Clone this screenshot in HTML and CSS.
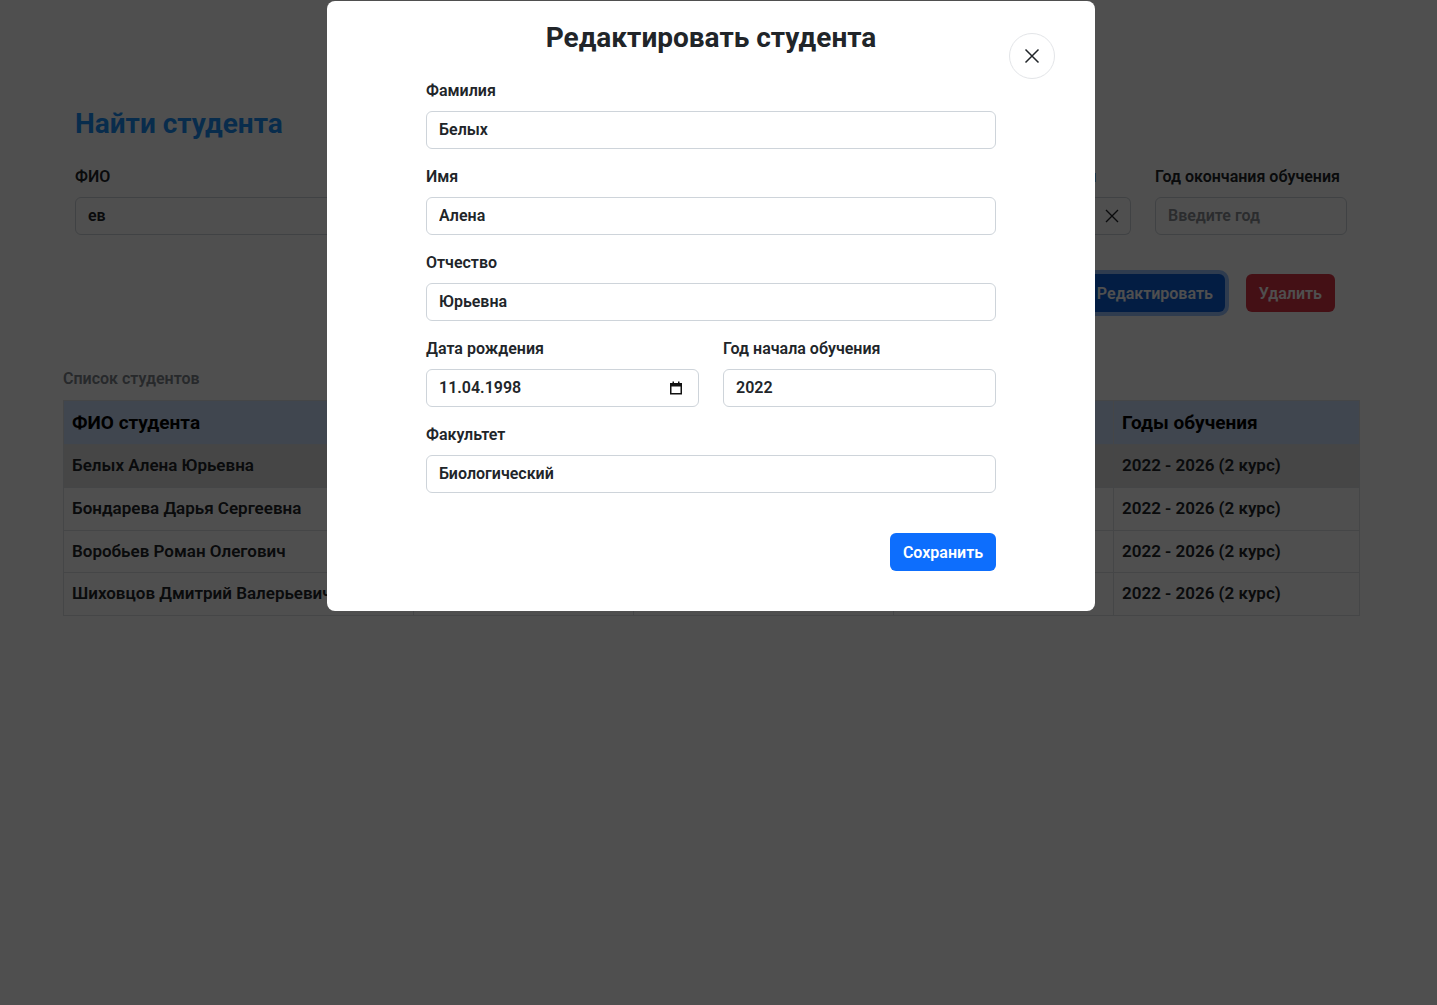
FILE: index.html
```html
<!DOCTYPE html>
<html lang="ru">
<head>
<meta charset="utf-8">
<title>Студенты</title>
<link rel="stylesheet" href="styles.css">
</head>
<body>
<div class="page">
  <main class="container">
    <section class="search">
      <h1 class="search-title">Найти студента</h1>
      <div class="filters">
        <div class="field field-name">
          <label class="label">ФИО</label>
          <input class="input" value="ев">
        </div>
        <div class="field field-fac">
          <label class="label">Факультет</label>
          <input class="input" placeholder="Выберите факультет">
        </div>
        <div class="field field-year">
          <label class="label">Год начала обучения</label>
          <div class="input-group">
            <input class="input input-grouped" value="2022">
            <button class="clear-btn" type="button" aria-label="Очистить">
              <svg width="16" height="16" viewBox="0 0 16 16"><path d="M2 2L14 14M14 2L2 14" stroke="#212529" stroke-width="1.4" fill="none"/></svg>
            </button>
          </div>
        </div>
        <div class="field field-year">
          <label class="label">Год окончания обучения</label>
          <input class="input" placeholder="Введите год">
        </div>
      </div>
      <div class="actions">
        <button class="btn btn-edit" type="button">Редактировать</button>
        <button class="btn btn-delete" type="button">Удалить</button>
      </div>
    </section>

    <div class="list-caption">Список студентов</div>
    <table class="students">
      <colgroup>
        <col class="c-name"><col class="c-date"><col class="c-fac"><col class="c-start"><col class="c-years">
      </colgroup>
      <thead>
        <tr><th>ФИО студента</th><th>Дата рождения</th><th>Факультет</th><th>Год начала</th><th>Годы обучения</th></tr>
      </thead>
      <tbody>
        <tr class="active"><td>Белых Алена Юрьевна</td><td>11.04.1998 (26 лет)</td><td>Биологический</td><td>2022</td><td>2022 - 2026 (2 курс)</td></tr>
        <tr><td>Бондарева Дарья Сергеевна</td><td>02.09.2000 (24 года)</td><td>Биологический</td><td>2022</td><td>2022 - 2026 (2 курс)</td></tr>
        <tr><td>Воробьев Роман Олегович</td><td>15.03.2001 (23 года)</td><td>Физический</td><td>2022</td><td>2022 - 2026 (2 курс)</td></tr>
        <tr><td>Шиховцов Дмитрий Валерьевич</td><td>21.07.2000 (24 года)</td><td>Математический</td><td>2022</td><td>2022 - 2026 (2 курс)</td></tr>
      </tbody>
    </table>
  </main>
</div>

<div class="backdrop"></div>

<div class="modal" role="dialog">
  <h2 class="modal-title">Редактировать студента</h2>
  <button class="modal-close" type="button" aria-label="Закрыть">
    <svg width="16" height="16" viewBox="0 0 16 16"><path d="M1.5 1.5L14.5 14.5M14.5 1.5L1.5 14.5" stroke="#212529" stroke-width="1.5" fill="none"/></svg>
  </button>
  <form class="modal-form">
    <div class="group">
      <label class="label">Фамилия</label>
      <input class="input" value="Белых">
    </div>
    <div class="group">
      <label class="label">Имя</label>
      <input class="input" value="Алена">
    </div>
    <div class="group">
      <label class="label">Отчество</label>
      <input class="input" value="Юрьевна">
    </div>
    <div class="group-row">
      <div class="group">
        <label class="label">Дата рождения</label>
        <div class="date-wrap">
          <input class="input" value="11.04.1998">
          <svg class="cal-icon" width="14" height="14" viewBox="0 0 14 14"><rect x="1.75" y="2.75" width="10.5" height="10" fill="none" stroke="#111" stroke-width="1.5"/><rect x="1" y="2" width="12" height="3.5" fill="#111"/><rect x="3.5" y="0.5" width="1.5" height="2" fill="#111"/><rect x="9" y="0.5" width="1.5" height="2" fill="#111"/></svg>
        </div>
      </div>
      <div class="group">
        <label class="label">Год начала обучения</label>
        <input class="input" value="2022">
      </div>
    </div>
    <div class="group">
      <label class="label">Факультет</label>
      <input class="input" value="Биологический">
    </div>
    <div class="modal-footer">
      <button class="btn btn-save" type="button">Сохранить</button>
    </div>
  </form>
</div>
</body>
</html>
```
FILE: styles.css
```css
* { box-sizing: border-box; }
html, body { margin: 0; height: 100%; }
body {
  font-family: Roboto, "Noto Sans", "Liberation Sans", sans-serif;
  font-size: 16px;
  color: #212529;
  background: #fff;
  overflow: hidden;
}
.page { width: 1422px; }
.container { width: 1320px; margin: 0 auto; padding: 0 12px; }

.search { padding: 106px 12px 0; }
.search-title {
  margin: 0;
  font-size: 28px;
  line-height: 36px;
  font-weight: 700;
  color: #1b8ff5;
}
.filters { display: flex; gap: 24px; margin-top: 23px; }
.field { display: flex; flex-direction: column; }
.field-name { flex: 1; }
.field-fac { width: 300px; }
.field-year { width: 192px; }

.label {
  display: block;
  font-size: 16px;
  line-height: 24px;
  font-weight: 600;
  margin-bottom: 8px;
  white-space: nowrap;
}
.input {
  display: block;
  width: 100%;
  height: 38px;
  border: 1px solid #ced4da;
  border-radius: 6px;
  padding: 0 12px 2px;
  font: inherit;
  font-weight: 600;
  line-height: 34px;
  color: #212529;
  background: #fff;
  outline: none;
}
.input::placeholder { color: #8a8f94; }
.input-group { display: flex; }
.input-grouped { border-radius: 6px 0 0 6px; }
.clear-btn {
  width: 38px;
  height: 38px;
  flex: none;
  border: 1px solid #ced4da;
  border-left: none;
  border-radius: 0 6px 6px 0;
  background: #fff;
  display: flex;
  align-items: center;
  justify-content: center;
  padding: 0;
}

.actions {
  display: flex;
  justify-content: flex-end;
  gap: 21px;
  margin-top: 39px;
  padding-right: 12px;
}
.btn {
  height: 38px;
  padding: 0 12px;
  border: none;
  border-radius: 6px;
  font: inherit;
  font-weight: 600;
  color: #fff;
}
.btn-edit { background: #0b5ed7; box-shadow: 0 0 0 4px rgba(49, 132, 253, .5); }
.btn-delete { background: #dc3545; padding: 0 13px; }

.list-caption {
  margin-top: 56px;
  margin-bottom: 10px;
  font-size: 16px;
  line-height: 22px;
  font-weight: 600;
  color: #7d848b;
}
.students {
  width: 1296px;
  border-collapse: collapse;
  table-layout: fixed;
}
.c-name { width: 350px; }
.c-date { width: 220px; }
.c-fac { width: 260px; }
.c-start { width: 220px; }
.c-years { width: 246px; }
.students th, .students td {
  border: 1px solid #dee2e6;
  padding: 8px;
  text-align: left;
  white-space: nowrap;
  overflow: hidden;
}
.students th {
  background: #cfe2ff;
  font-size: 19px;
  line-height: 27px;
  font-weight: 700;
  color: #000;
}
.students td {
  font-size: 17px;
  line-height: 25.75px;
  font-weight: 600;
}
.students tr.active td { background: #e0e1e2; }

.backdrop {
  position: fixed;
  inset: 0;
  background: rgba(0, 0, 0, .69);
}
.modal {
  position: fixed;
  top: 1px;
  left: 327px;
  width: 768px;
  background: #fff;
  border-radius: 8px;
  padding: 20px 99px 40px;
}
.modal-title {
  margin: 0 0 24px;
  text-align: center;
  font-size: 28px;
  line-height: 34px;
  font-weight: 700;
  color: #212529;
}
.modal-close {
  position: absolute;
  top: 32px;
  right: 40px;
  width: 46px;
  height: 46px;
  border-radius: 50%;
  border: 1px solid #e3e5e8;
  background: #fff;
  display: flex;
  align-items: center;
  justify-content: center;
  padding: 0;
}
.group { margin-bottom: 16px; }
.group-row { display: grid; grid-template-columns: 1fr 1fr; gap: 24px; }
.date-wrap { position: relative; }
.cal-icon { position: absolute; right: 16px; top: 12px; }
.modal-form { display: flex; flex-direction: column; }
.modal-footer { display: flex; justify-content: flex-end; margin-top: 24px; }
.btn-save { width: 106px; padding: 0; background: #0d6efd; }
```
